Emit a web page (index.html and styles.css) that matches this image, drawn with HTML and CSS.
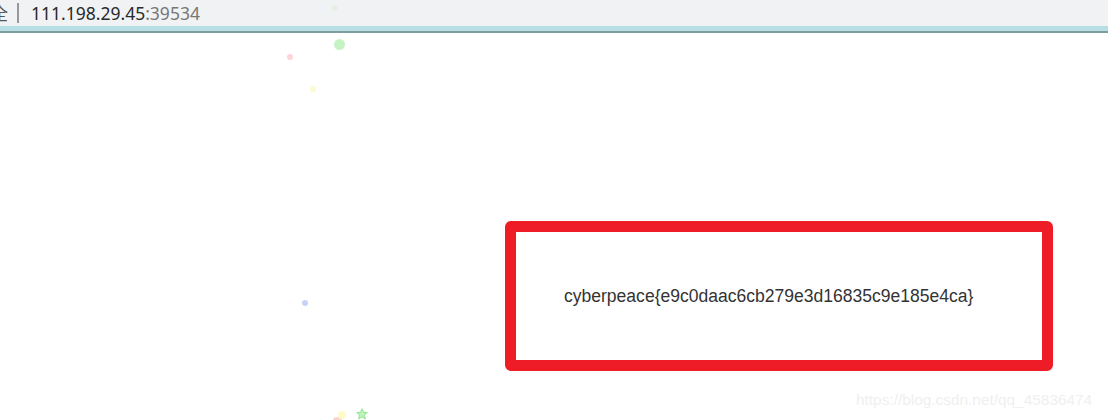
FILE: index.html
```html
<!DOCTYPE html>
<html lang="en">
<head>
    <meta charset="UTF-8">
    <title>111.198.29.45:39534</title>
    <link rel="stylesheet" href="styles.css">
</head>
<body>
<div class="addr-bar">
    <span class="addr-lock">全</span>
    <span class="addr-sep"></span>
    <span class="addr-host">111.198.29.45</span><span class="addr-port">:39534</span>
</div>
<div class="addr-line"></div>
<div class="page">
    <div class="flag-box">
        <p class="flag">cyberpeace{e9c0daac6cb279e3d16835c9e185e4ca}</p>
    </div>

    <!-- 鼠标特效留下的小点 -->
    <span class="dot dot-green-big"></span>
    <span class="dot dot-pink"></span>
    <span class="dot dot-yellow"></span>
    <span class="dot dot-blue"></span>
    <span class="dot dot-pink-low"></span>
    <span class="dot dot-yellow-low"></span>
    <svg class="star" width="12" height="12" viewBox="0 0 12 12">
        <polygon points="6,0.8 7.5,4.3 11.3,4.5 8.4,7 9.3,10.9 6,8.8 2.7,10.9 3.6,7 0.7,4.5 4.5,4.3"
                 fill="#bff3bd" stroke="#8fe58b" stroke-width="1"/>
    </svg>

    <div class="watermark">https://blog.csdn.net/qq_45836474</div>
</div>
<span class="dot dot-top"></span>
</body>
</html>
```

FILE: styles.css
```css
* {
    padding: 0;
    margin: 0;
}
body {
    width: 1108px;
    height: 420px;
    overflow: hidden;
    position: relative;
    background-color: #fff;
    font-family: "Noto Sans", "Liberation Sans", sans-serif;
}
.addr-bar {
    height: 26px;
    background-color: #f1f2f4;
    display: flex;
    align-items: center;
    font-size: 17.5px;
    line-height: 26px;
    color: #222;
    white-space: nowrap;
}
.addr-lock {
    margin-left: -9px;
    color: #555;
    font-family: "Noto Sans CJK SC", sans-serif;
    font-size: 17px;
}
.addr-sep {
    width: 2px;
    height: 20px;
    margin: 0 12px 0 9px;
    background-color: #999;
}
.addr-host {
    color: #2a2a2a;
}
.addr-port {
    color: #777;
}
.addr-line {
    height: 5px;
    background-color: #b8e0e4;
    border-bottom: 2px solid #7d9d9f;
}
.page {
    position: relative;
    height: 387px;
    padding-top: 188px;
    padding-left: 505px;
    box-sizing: border-box;
}
.flag-box {
    width: 548px;
    height: 150px;
    box-sizing: border-box;
    border: 11px solid #ed1c27;
    border-radius: 6px;
    display: flex;
    align-items: center;
    padding-left: 48px;
}
.flag {
    font-family: "Liberation Sans", Arial, sans-serif;
    font-size: 17.55px;
    color: #333;
}
.dot {
    position: absolute;
    border-radius: 50%;
}
.dot-top {
    left: 332px;
    top: 5px;
    width: 6px;
    height: 6px;
    background-color: #e2f0e2;
}
.dot-green-big {
    left: 334px;
    top: 6px;
    width: 11px;
    height: 11px;
    background-color: #c6f3c6;
}
.dot-pink {
    left: 287px;
    top: 21px;
    width: 6px;
    height: 6px;
    background-color: #fdd4d8;
}
.dot-yellow {
    left: 310px;
    top: 53px;
    width: 6px;
    height: 6px;
    background-color: #fdfbd2;
}
.dot-blue {
    left: 302px;
    top: 267px;
    width: 6px;
    height: 6px;
    background-color: #c7d3fb;
}
.dot-pink-low {
    left: 333px;
    top: 384px;
    width: 9px;
    height: 6px;
    background-color: #fcd2cf;
}
.dot-yellow-low {
    left: 338px;
    top: 378px;
    width: 8px;
    height: 8px;
    background-color: #fdfbc8;
}
.star {
    position: absolute;
    left: 356px;
    top: 375px;
}
.watermark {
    position: absolute;
    left: 856px;
    top: 358px;
    font-family: "Liberation Sans", Arial, sans-serif;
    font-size: 15.4px;
    color: #efefef;
}
```
